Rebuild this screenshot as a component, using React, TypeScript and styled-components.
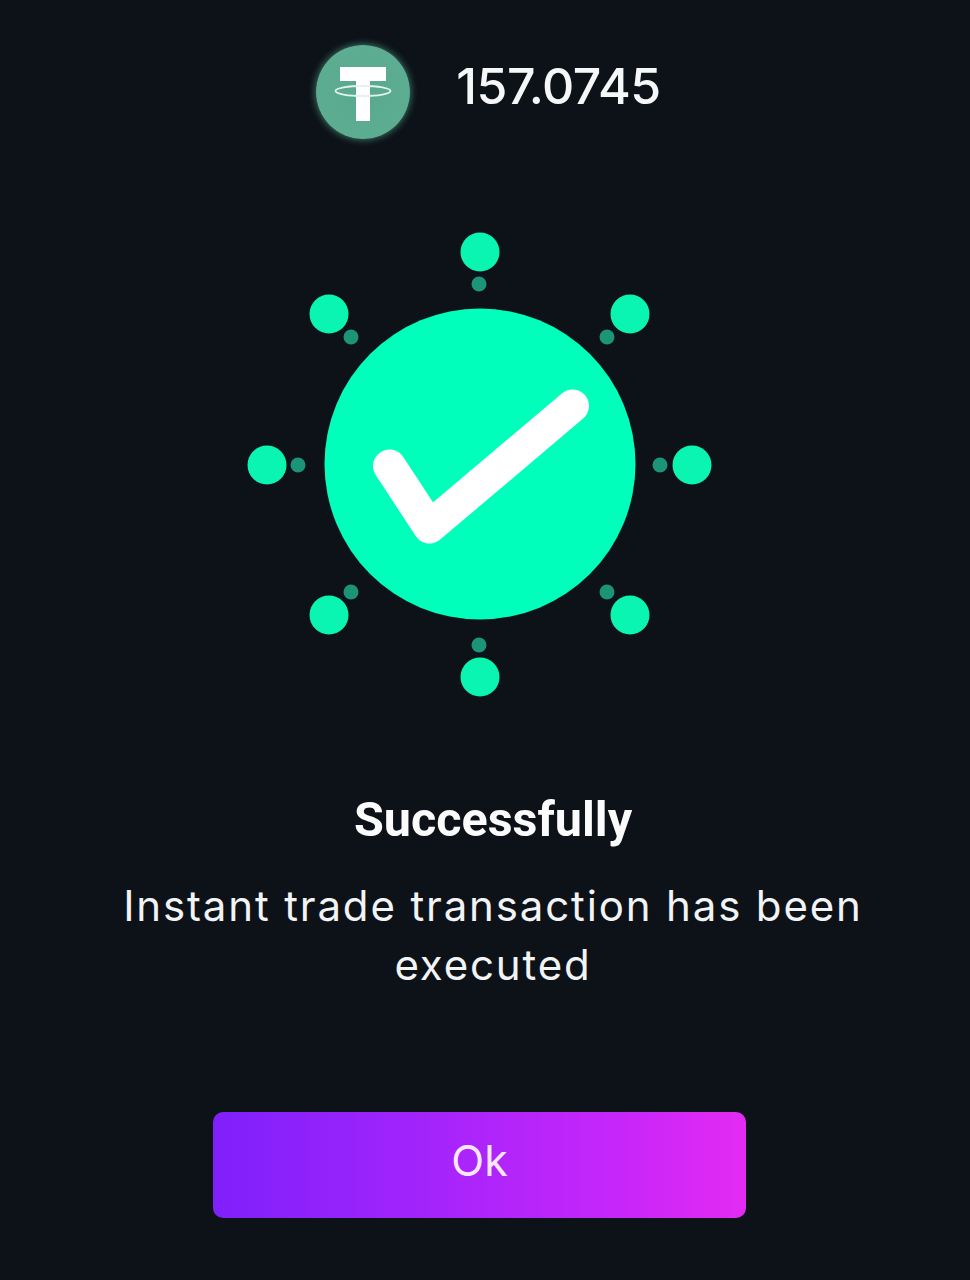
import React from 'react';
import styled, { createGlobalStyle } from 'styled-components';

const GlobalStyle = createGlobalStyle`
  html, body {
    margin: 0;
    padding: 0;
    background: #0c1218;
  }
`;

const Page = styled.div`
  width: 970px;
  height: 1280px;
  box-sizing: border-box;
  padding: 45px 11px 0 0;
  display: flex;
  flex-direction: column;
  align-items: center;
  background: #0c1218;
  color: #fff;
  overflow: hidden;
`;

const AmountRow = styled.div`
  display: flex;
  align-items: center;
  gap: 46px;
  margin-left: 18px;
  height: 94px;
`;

const Coin = styled.div`
  width: 94px;
  height: 94px;
  border-radius: 50%;
  background: radial-gradient(circle at 50% 50%, #5aa98f 0%, #5cad92 80%, #7ccbb1 100%);
  box-shadow: 0 0 7px 1px rgba(110, 210, 175, 0.5);
  display: flex;
  align-items: center;
  justify-content: center;
`;

const Amount = styled.div`
  font-family: Inter, "Liberation Sans", sans-serif;
  font-size: 50px;
  font-weight: 500;
  line-height: 60px;
  padding-bottom: 12px;
  color: #f6f7f8;
  letter-spacing: -0.5px;
`;

const SunGraphic = styled.svg`
  display: block;
  margin-top: 81px;
  width: 500px;
  height: 480px;
`;

const TextBlock = styled.div`
  margin-top: 92px;
  margin-left: 27px;
  display: flex;
  flex-direction: column;
  align-items: center;
  text-align: center;
`;

const Heading = styled.h1`
  margin: 0;
  font-family: Roboto, "Liberation Sans", sans-serif;
  font-size: 48.5px;
  line-height: 56px;
  font-weight: 700;
  color: #fbfbfc;
`;

const Message = styled.p`
  margin: 28px 0 0;
  width: 800px;
  font-family: Inter, "Liberation Sans", sans-serif;
  font-size: 42px;
  line-height: 59px;
  letter-spacing: 1.85px;
  font-weight: 400;
  color: #f2f3f4;
`;

const OkButton = styled.button`
  margin-top: 118px;
  width: 533px;
  height: 106px;
  padding: 0 0 10px;
  border: 0;
  border-radius: 10px;
  background: linear-gradient(90deg, #7f20fb 0%, #a524fb 42%, #c926f9 78%, #e42bf3 100%);
  font-family: Inter, "Liberation Sans", sans-serif;
  font-size: 43px;
  font-weight: 400;
  color: #fde6ff;
`;

const rays = [
  { big: [250, 32], small: [249, 64] },
  { big: [400, 94], small: [377, 117] },
  { big: [462, 245], small: [430, 245] },
  { big: [400, 395], small: [377, 372] },
  { big: [250, 457], small: [249, 425] },
  { big: [99, 395], small: [121, 372] },
  { big: [37, 245], small: [68, 245] },
  { big: [99, 94], small: [121, 117] },
];

const TetherCoin: React.FC = () => (
  <Coin>
    <svg width="70" height="70" viewBox="0 0 70 70" fill="none">
      <path d="M12 10h46v14H42v40H28V24H12z" fill="#fff" />
      <ellipse cx="35" cy="34" rx="27.5" ry="5" stroke="#e4f3ee" strokeWidth="1.8" />
    </svg>
  </Coin>
);

const App: React.FC = () => {
  return (
    <Page>
      <GlobalStyle />
      <AmountRow>
        <TetherCoin />
        <Amount>157.0745</Amount>
      </AmountRow>
      <SunGraphic viewBox="0 0 500 480">
        <circle cx="250" cy="244" r="155.5" fill="#00ffbb" />
        {rays.map((ray, i) => (
          <g key={i}>
            <circle cx={ray.big[0]} cy={ray.big[1]} r="19.5" fill="#0af5b2" />
            <circle cx={ray.small[0]} cy={ray.small[1]} r="7.5" fill="#1b9478" />
          </g>
        ))}
        <path
          d="M159.5 246L199.5 307L342.5 186"
          fill="none"
          stroke="#fff"
          strokeWidth="33"
          strokeLinecap="round"
          strokeLinejoin="round"
        />
      </SunGraphic>
      <TextBlock>
        <Heading>Successfully</Heading>
        <Message>Instant trade transaction has been executed</Message>
      </TextBlock>
      <OkButton>Ok</OkButton>
    </Page>
  );
};

export default App;
